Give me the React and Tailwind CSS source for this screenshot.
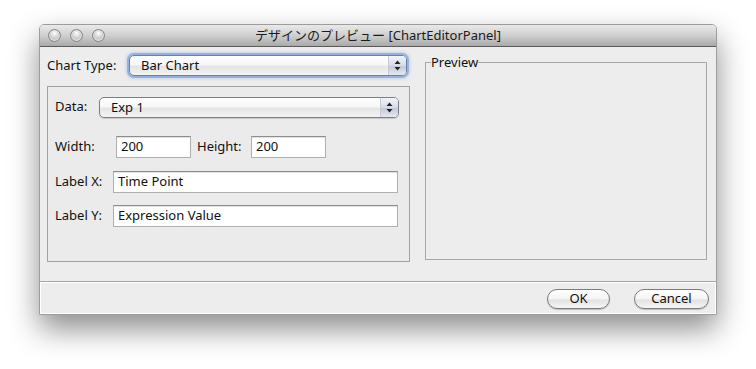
const font = "font-['Noto_Sans','Noto_Sans_CJK_JP',sans-serif]";

const Light = () => (
  <div className="w-[13px] h-[13px] rounded-full border border-[#858585] bg-[radial-gradient(circle_at_50%_30%,#ffffff_0%,#d2d2d2_45%,#a4a4a4_100%)] shadow-[inset_0_-1px_2px_rgba(255,255,255,0.8)]" />
);

const Arrows = () => (
  <svg width="7" height="11" viewBox="0 0 7 11">
    <path d="M3.5 0.5 L6.5 4 L0.5 4 Z" fill="#222" />
    <path d="M3.5 10.5 L6.5 7 L0.5 7 Z" fill="#222" />
  </svg>
);

const Combo = ({ value, focused, className }) => (
  <div
    className={`relative h-[21px] flex items-center rounded-[5px] border bg-[linear-gradient(#ffffff,#f7f7f7_45%,#e4e4e4_55%,#f4f4f4)] ${
      focused
        ? "border-[#6a7ea6] shadow-[0_0_0_2px_rgba(110,150,215,0.55),0_0_3px_3px_rgba(120,160,220,0.35)]"
        : "border-[#7d7d86] shadow-[0_1px_1px_rgba(0,0,0,0.15)]"
    } ${className}`}
  >
    <span className="pl-[11px] flex-1 text-[13px] text-[#111] leading-none">{value}</span>
    <div className="h-full w-[18px] flex items-center justify-center border-l border-[#c8cad4] rounded-r-[4px] bg-[linear-gradient(#f2f4fa,#d6dbe8_50%,#c3c9d9_55%,#e6e9f2)]">
      <Arrows />
    </div>
  </div>
);

const Field = ({ value, className }) => (
  <div
    className={`h-[22px] flex items-center bg-white border border-[#b0b0b0] border-t-[#8c8c8c] shadow-[inset_0_1px_1px_rgba(0,0,0,0.12)] pl-[4px] text-[13px] text-[#111] ${className}`}
  >
    {value}
  </div>
);

const Button = ({ label, className }) => (
  <div
    className={`h-[20px] flex items-center justify-center rounded-full border border-[#7a7a7a] bg-[linear-gradient(#ffffff,#f4f4f4_50%,#e2e2e2_55%,#f6f6f6)] shadow-[0_1px_1px_rgba(0,0,0,0.2)] text-[13px] text-[#111] ${className}`}
  >
    {label}
  </div>
);

export default function App() {
  return (
    <div className={`w-[756px] h-[369px] bg-white pt-[24px] pl-[39px] ${font}`}>
      <div className="w-[678px] flex flex-col rounded-t-[5px] border border-[#9c9c9c] shadow-[0_14px_30px_rgba(0,0,0,0.45)]">
        {/* title bar */}
        <div className="relative h-[22px] flex items-center rounded-t-[4px] border-b border-[#5a5a5a] bg-[linear-gradient(#e9e9e9,#cfcfcf_50%,#a9a9a9)]">
          <div className="flex gap-[9px] pl-[8px]">
            <Light />
            <Light />
            <Light />
          </div>
          <div className="absolute inset-0 flex items-center justify-center text-[13px] text-[#1b1b1b] pointer-events-none">
            デザインのプレビュー [ChartEditorPanel]
          </div>
        </div>

        {/* body */}
        <div className="h-[234px] bg-[#ededed] flex pt-[8px] pl-[7px] pr-[9px] gap-[15px]">
          <div className="w-[363px] flex flex-col">
            <div className="h-[21px] flex items-center">
              <span className="text-[13px] text-[#111] w-[82px]">Chart Type:</span>
              <Combo value="Bar Chart" focused className="w-[278px]" />
            </div>
            <div className="mt-[10px] h-[176px] border border-[#a2a2a2] bg-[#ebebeb] pt-[9px] pl-[7px] pr-[10px] flex flex-col">
              <div className="h-[22px] flex items-center">
                <span className="text-[13px] text-[#111] w-[44px]">Data:</span>
                <Combo value="Exp 1" className="flex-1" />
              </div>
              <div className="mt-[18px] h-[22px] flex items-center">
                <span className="text-[13px] text-[#111] w-[61px]">Width:</span>
                <Field value="200" className="w-[75px]" />
                <span className="text-[13px] text-[#111] ml-[6px] w-[54px]">Height:</span>
                <Field value="200" className="w-[75px]" />
              </div>
              <div className="mt-[13px] h-[22px] flex items-center">
                <span className="text-[13px] text-[#111] w-[58px]">Label X:</span>
                <Field value="Time Point" className="flex-1 mr-[1px]" />
              </div>
              <div className="mt-[12px] h-[22px] flex items-center">
                <span className="text-[13px] text-[#111] w-[58px]">Label Y:</span>
                <Field value="Expression Value" className="flex-1 mr-[1px]" />
              </div>
            </div>
          </div>
          <fieldset className="flex-1 h-[205px] border border-[#a8a8a8] rounded-none">
            <legend className="ml-[5px] text-[13px] text-[#111] leading-[15px]">Preview</legend>
          </fieldset>
        </div>

        {/* footer */}
        <div className="h-[33px] bg-[#ededed] border-t border-[#a6a6a6] flex items-center justify-end gap-[24px] pr-[7px] pt-[1px] shadow-[inset_1px_1px_0_#ffffff,inset_-1px_-1px_0_#ffffff]">
          <Button label="OK" className="w-[63px]" />
          <Button label="Cancel" className="w-[75px]" />
        </div>
      </div>
    </div>
  );
}
